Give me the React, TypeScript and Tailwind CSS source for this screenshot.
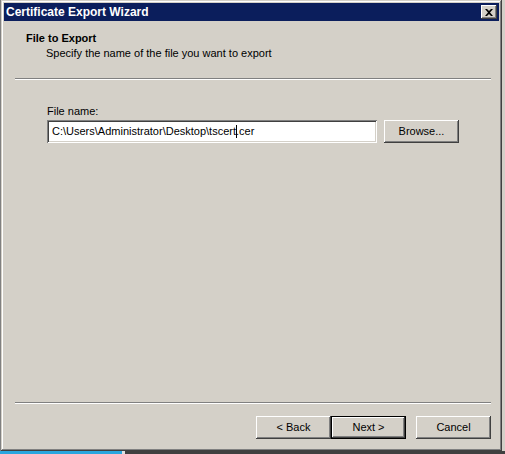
import React from "react";

const raised =
  "shadow-[inset_-1px_-1px_0_#404040,inset_1px_1px_0_#ffffff,inset_-2px_-2px_0_#808080,inset_2px_2px_0_#d4d0c8]";

function Btn({ label, def }: { label: string; def?: boolean }) {
  if (def) {
    return (
      <div className="w-[75px] h-[23px] border border-black bg-[#d4d0c8] flex">
        <div
          className={`flex-1 flex items-center justify-center text-[11px] leading-[13px] text-black ${raised}`}
        >
          {label}
        </div>
      </div>
    );
  }
  return (
    <div
      className={`w-[75px] h-[23px] bg-[#d4d0c8] flex items-center justify-center text-[11px] leading-[13px] text-black ${raised}`}
    >
      {label}
    </div>
  );
}

export default function App() {
  return (
    <div
      className="w-[505px] h-[454px] bg-[#d4d0c8] flex flex-col overflow-hidden"
      style={{ fontFamily: '"Liberation Sans", Arial, sans-serif' }}
    >
      <div className="flex h-[451px]">
        <div className="w-[1px] bg-[#808080]" />
        {/* Window */}
        <div className="w-[501px] h-[451px] p-[3px] bg-[#d4d0c8] flex flex-col shadow-[inset_-1px_-1px_0_#404040,inset_1px_1px_0_#d4d0c8,inset_-2px_-2px_0_#808080,inset_2px_2px_0_#ffffff]">
          {/* Title bar */}
          <div className="h-[18px] bg-[#0b1e5c] flex items-center justify-between pl-[2px] pr-[2px]">
            <span className="text-white font-bold text-[12px] leading-[14px]">
              Certificate Export Wizard
            </span>
            <div
              className={`w-[16px] h-[14px] bg-[#d4d0c8] flex items-center justify-center ${raised}`}
            >
              <svg width="8" height="7" viewBox="0 0 8 7">
                <path
                  d="M0 0h2l2 2 2-2h2L5 3.5 8 7H6L4 5 2 7H0l3-3.5z"
                  fill="#000"
                />
              </svg>
            </div>
          </div>

          {/* Header */}
          <div className="text-[11px] leading-[13px] text-black">
            <div className="mt-[11px] pl-[22px] font-bold">File to Export</div>
            <div className="mt-[2px] pl-[42px]">
              Specify the name of the file you want to export
            </div>
          </div>
          <div className="mt-[18px] ml-[11px] mr-[8px] h-[2px] border-t border-t-[#808080] border-b border-b-white" />

          {/* Body */}
          <div className="flex flex-col pl-[43px] text-[11px] leading-[13px] text-black">
            <div className="mt-[25px]">File name:</div>
            <div className="mt-[2px] flex items-start gap-[7px]">
              <div className="w-[330px] h-[23px] bg-white shadow-[inset_1px_1px_0_#808080,inset_-1px_-1px_0_#ffffff,inset_2px_2px_0_#404040,inset_-2px_-2px_0_#d4d0c8] flex items-center pl-[5px] whitespace-nowrap">
                <span>C:\Users\Administrator\Desktop\tscert</span>
                <span className="inline-block w-[1px] h-[13px] bg-black -mr-[1px]" />
                <span>.cer</span>
              </div>
              <Btn label="Browse..." />
            </div>
          </div>

          <div className="flex-1" />

          {/* Footer */}
          <div className="ml-[11px] mr-[8px] h-[2px] border-t border-t-[#808080] border-b border-b-white" />
          <div className="mt-[12px] mb-[9px] flex justify-end pr-[8px]">
            <Btn label="< Back" />
            <Btn label="Next >" def />
            <div className="w-[10px]" />
            <Btn label="Cancel" />
          </div>
        </div>
        <div className="flex-1 bg-[#d4d0c8]" />
      </div>
      <div className="h-[3px] flex">
        <div className="w-[122px] bg-[#2aa6df]" />
        <div className="w-[3px] bg-[#e0e0e0]" />
        <div className="flex-1 bg-[#404040]" />
      </div>
    </div>
  );
}
